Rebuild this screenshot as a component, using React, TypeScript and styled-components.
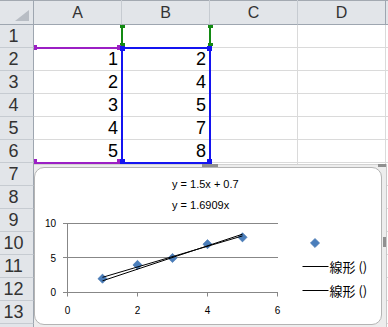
import { FC } from 'react';
import styled, { createGlobalStyle } from 'styled-components';

const ROW_HEADER = 34;
const COL_WIDTH = 88;
const HEAD_HEIGHT = 25;
const ROW_HEIGHT = 23;

// E and row 14 are only a sliver at the window edge, so they carry no label
const columns = ['A', 'B', 'C', 'D', ''];
const rows = Array.from({ length: 14 }, (_, i) => i + 1);
const LAST_LABELLED_ROW = 13;
const values: Record<number, [number, number]> = {
  2: [1, 2],
  3: [2, 4],
  4: [3, 5],
  5: [4, 7],
  6: [5, 8],
};

// cell border coordinates
const colLine = (c: number) => ROW_HEADER - 1 + c * COL_WIDTH;
const rowLine = (r: number) => HEAD_HEIGHT - 1 + (r - 1) * ROW_HEIGHT;

const GlobalStyle = createGlobalStyle`
  html, body {
    margin: 0;
    padding: 0;
    background: #fff;
    overflow: hidden;
  }
  body {
    font-family: 'Liberation Sans', Arial, sans-serif;
  }
`;

const Sheet = styled.div`
  position: relative;
  width: 388px;
  height: 327px;
  overflow: hidden;
  display: grid;
  grid-template-columns: ${ROW_HEADER}px repeat(4, ${COL_WIDTH}px) 40px;
  grid-template-rows: ${HEAD_HEIGHT}px;
  grid-auto-rows: ${ROW_HEIGHT}px;
`;

const HeaderBase = styled.div`
  box-sizing: border-box;
  background: #e2e5e9;
  color: #333;
  display: flex;
  align-items: center;
  justify-content: center;
`;

const Corner = styled(HeaderBase)`
  border-right: 1px solid #9ea6b0;
  border-bottom: 1px solid #9ea6b0;
  box-shadow: inset 0 1px 0 #a3a9b1;
  align-items: flex-end;
  justify-content: flex-end;
  padding: 0 4px 3px 0;
`;

const SelectAll = styled.div`
  width: 14px;
  height: 11px;
  background: #b8bdc4;
  clip-path: polygon(100% 0, 100% 100%, 0 100%);
`;

const ColumnHeader = styled(HeaderBase)<{ $edge?: boolean }>`
  border-right: 1px solid ${(p) => (p.$edge ? '#9ea6b0' : '#c6cbd1')};
  border-bottom: 1px solid #9ea6b0;
  box-shadow: inset 0 1px 0 #a3a9b1;
  font-size: 16px;
  padding-top: 2px;
`;

const RowHeader = styled(HeaderBase)`
  border-right: 1px solid #9ea6b0;
  border-bottom: 1px solid #c6cbd1;
  font-size: 18px;
  padding: 1px 6px 0 0;
`;

const Cell = styled.div`
  box-sizing: border-box;
  border-right: 1px solid #dadada;
  border-bottom: 1px solid #dadada;
  font-size: 18px;
  line-height: 22px;
  text-align: right;
  padding-right: 3px;
  color: #000;
`;

const Range = styled.div<{ $color: string; $open?: 'top' | 'left' }>`
  position: absolute;
  box-sizing: border-box;
  border: 2px solid ${(p) => p.$color};
  ${(p) => (p.$open ? `border-${p.$open}: none;` : '')}
  pointer-events: none;
`;

const Handle = styled.div<{ $color: string }>`
  position: absolute;
  background: ${(p) => p.$color};
`;

const ChartFrame = styled.div`
  position: absolute;
  left: 34px;
  top: 164px;
  width: 353px;
  height: 170px;
  box-sizing: border-box;
  background: #ededed;
  border-top: 1px solid #d2d2d2;
  border-right: 1px solid #c8c8c8;
  padding: 2px 4px 0 0;
`;

const Grip = styled.div`
  position: absolute;
  background-image: radial-gradient(circle, #8d8d8d 0.7px, transparent 0.9px);
  background-size: 2px 2px;
`;

const ChartArea = styled.div`
  box-sizing: border-box;
  width: 348px;
  height: 158px;
  background: #fff;
  border: 1px solid #b4b4b4;
  border-radius: 10px;
  overflow: hidden;
`;

const ChartSvg = styled.svg`
  display: block;
  font-family: 'Liberation Sans', Arial, sans-serif;
`;

const GREEN = '#138a13';
const PURPLE = '#9b1fc4';
const BLUE = '#1414f0';

const box = (c0: number, r0: number, c1: number, r1: number) => ({
  left: colLine(c0),
  top: rowLine(r0),
  width: colLine(c1 + 1) + 2 - colLine(c0),
  height: rowLine(r1 + 1) + 2 - rowLine(r0),
});

const handles: [number, number, number, number, string][] = [
  [120, 25, 5, 3, GREEN],
  [208, 25, 5, 3, GREEN],
  [120, 43, 5, 3, GREEN],
  [208, 43, 5, 3, GREEN],
  [34, 45, 3, 5, PURPLE],
  [117, 45, 4, 5, PURPLE],
  [34, 159, 3, 5, PURPLE],
  [117, 159, 4, 5, PURPLE],
  [120, 46, 5, 5, BLUE],
  [207, 46, 5, 5, BLUE],
  [120, 159, 5, 5, BLUE],
  [207, 159, 5, 5, BLUE],
];

// chart scales, in page coordinates
const px = (v: number) => 67.5 + 35 * v;
const py = (v: number) => 292.5 - 6.9 * v;
const points = [1, 2, 3, 4, 5].map((x) => [x, values[x + 1][1]]);

const Diamond: FC<{ x: number; y: number }> = ({ x, y }) => (
  <path
    d={`M${x} ${y - 4.6}L${x + 4.6} ${y}L${x} ${y + 4.6}L${x - 4.6} ${y}Z`}
    fill="#4a7ebb"
    stroke="#3f70ab"
    strokeWidth="0.6"
  />
);

const TrendChart: FC = () => (
  <ChartSvg width={346} height={156} viewBox="35 168 346 156">
    <text x={172} y={187.5} fontSize={11} fill="#000">
      y = 1.5x + 0.7
    </text>
    <text x={172} y={208.5} fontSize={11} fill="#000">
      y = 1.6909x
    </text>

    <g stroke="#878787" strokeWidth={1} fill="none">
      {[223.5, 257.5, 292.5].map((y) => (
        <line key={y} x1={63} y1={y} x2={278} y2={y} />
      ))}
      <line x1={67.5} y1={223.5} x2={67.5} y2={296.5} />
      {[2, 4, 6].map((v) => (
        <line key={v} x1={px(v)} y1={292.5} x2={px(v)} y2={296.5} />
      ))}
    </g>

    <g fontSize={10} fill="#000">
      <text x={56} y={227} textAnchor="end">10</text>
      <text x={56} y={261.5} textAnchor="end">5</text>
      <text x={56} y={296} textAnchor="end">0</text>
      {[0, 2, 4, 6].map((v) => (
        <text key={v} x={px(v)} y={314} textAnchor="middle">
          {v}
        </text>
      ))}
    </g>

    {points.map(([x, y]) => (
      <Diamond key={x} x={px(x)} y={py(y)} />
    ))}

    <g stroke="#000" strokeWidth={1}>
      <line x1={px(1)} y1={py(2.2)} x2={px(5)} y2={py(8.2)} />
      <line x1={px(1)} y1={py(1.6909)} x2={px(5)} y2={py(8.4545)} />
    </g>

    <Diamond x={315} y={243} />
    <g stroke="#000" strokeWidth={1}>
      <line x1={302.5} y1={266.5} x2={328.5} y2={266.5} />
      <line x1={302.5} y1={290.5} x2={328.5} y2={290.5} />
    </g>
    <g fontSize={13} fill="#000" fontFamily="'Noto Sans CJK JP', sans-serif">
      <text x={329.5} y={271.5}>線形 ()</text>
      <text x={329.5} y={295.5}>線形 ()</text>
    </g>
  </ChartSvg>
);

const Row: FC<{ row: number }> = ({ row }) => {
  const data = values[row];
  return (
    <>
      <RowHeader>{row <= LAST_LABELLED_ROW ? row : ''}</RowHeader>
      {columns.map((c, i) => (
        <Cell key={i}>{data && i < 2 ? data[i] : ''}</Cell>
      ))}
    </>
  );
};

const App: FC = () => {
  const green = box(1, 1, 1, 1);
  const purple = box(0, 2, 0, 6);
  const blue = box(1, 2, 1, 6);

  return (
    <>
      <GlobalStyle />
      <Sheet>
        <Corner>
          <SelectAll />
        </Corner>
        {columns.map((c, i) => (
          <ColumnHeader key={i} $edge={i === 3}>
            {c}
          </ColumnHeader>
        ))}
        {rows.map((r) => (
          <Row key={r} row={r} />
        ))}

        <Range
          $color={GREEN}
          $open="top"
          style={{ left: green.left, top: green.top + 1, width: green.width, height: green.height - 1 }}
        />
        <Range
          $color={PURPLE}
          $open="left"
          style={{ left: purple.left + 1, top: purple.top, width: purple.width - 1, height: purple.height }}
        />
        <Range $color={BLUE} style={blue} />
        {handles.map(([left, top, width, height, color], i) => (
          <Handle key={i} $color={color} style={{ left, top, width, height }} />
        ))}

        <ChartFrame>
          <ChartArea>
            <TrendChart />
          </ChartArea>
          <Grip style={{ left: 168, top: -1, width: 16, height: 3 }} />
          <Grip style={{ left: 344, top: -1, width: 8, height: 3 }} />
          <Grip style={{ left: 349, top: 72, width: 3, height: 10 }} />
        </ChartFrame>
      </Sheet>
    </>
  );
};

export default App;
